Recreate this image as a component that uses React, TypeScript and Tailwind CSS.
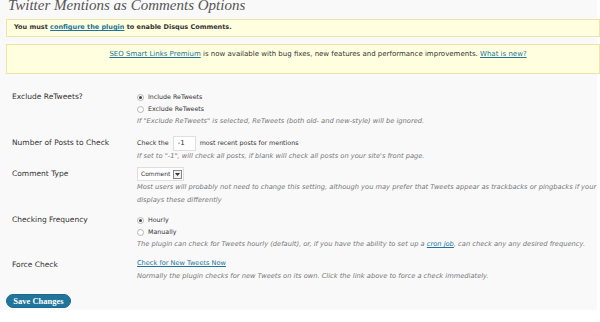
import React from "react";

const Radio = ({ checked }: { checked?: boolean }) => (
  <span className="inline-flex items-center justify-center w-[7px] h-[7px] rounded-full border border-[#b5b5b5] bg-white mr-[4px] shrink-0">
    {checked && <span className="w-[3px] h-[3px] rounded-full bg-[#444]" />}
  </span>
);

export default function App() {
  return (
    <div className="w-[600px] h-[322px] bg-white overflow-hidden" style={{ fontFamily: '"DejaVu Sans", Verdana, sans-serif' }}>
      <div className="w-[597px] h-[310px] bg-[#f9f9f9] text-[#333]">
        <div className="h-[19px] pl-[8px] overflow-hidden">
          <div className="mt-[-6px] italic text-[#555] text-[15px] leading-[22px] whitespace-nowrap" style={{ fontFamily: '"Liberation Serif", Georgia, serif' }}>
            Twitter Mentions as Comments Options
          </div>
        </div>
        <div className="ml-[6px] mr-[-3px] h-[18px] bg-[#ffffe0] border border-[#ece6a6] flex items-center pl-[7px] font-bold text-[6.5px] text-[#333]">
          <span>You must <a className="text-[#21759b] underline">configure the plugin</a> to enable Disqus Comments.</span>
        </div>
        <div className="ml-[6px] mr-[-3px] mt-[7px] h-[30px] bg-[#ffffe0] border border-[#ece6a6] pt-[3px] pl-[30px] text-center text-[7px] leading-[12px]">
          <a className="text-[#21759b] underline">SEO Smart Links Premium</a> is now available with bug fixes, new features and performance improvements. <a className="text-[#21759b] underline">What is new?</a>
        </div>

        <div className="overflow-hidden">
          <div className="mt-[17px] flex leading-[12px]">
            <div className="w-[137px] shrink-0 pl-[12px] text-[7.5px]">Exclude ReTweets?</div>
            <div className="flex flex-col">
              <div className="flex items-center text-[6.3px]"><Radio checked />Include ReTweets</div>
              <div className="flex items-center text-[6.3px]"><Radio />Exclude ReTweets</div>
              <div className="italic text-[#777] text-[6.7px] whitespace-nowrap">If "Exclude ReTweets" is selected, ReTweets (both old- and new-style) will be ignored.</div>
            </div>
          </div>

          <div className="mt-[9px] flex leading-[12px]">
            <div className="w-[137px] shrink-0 pl-[12px] pt-[1px] text-[7.5px]">Number of Posts to Check</div>
            <div className="flex flex-col">
              <div className="flex items-center h-[14px] text-[6.3px] whitespace-nowrap">
                Check the
                <span className="mx-[4px] w-[23px] h-[15px] bg-white border border-[#dfdfdf] flex items-center pl-[4px] text-[7px]">-1</span>
                most recent posts for mentions
              </div>
              <div className="italic text-[#777] text-[6.7px] whitespace-nowrap">If set to "-1", will check all posts, if blank will check all posts on your site's front page.</div>
            </div>
          </div>

          <div className="mt-[5px] flex leading-[12px]">
            <div className="w-[137px] shrink-0 pl-[12px] pt-[1px] text-[7.5px]">Comment Type</div>
            <div className="flex flex-col min-w-0">
              <div className="h-[14px] flex">
                <span className="w-[47px] h-[14px] bg-white border border-[#dfdfdf] flex items-center pl-[3px] justify-between pr-[1px] text-[6px]">
                  Comment
                  <span className="w-[9px] h-[9px] border border-[#888] bg-[#f0f0f0] flex items-center justify-center">
                    <svg width="5" height="3" viewBox="0 0 5 3"><path d="M0 0h5L2.5 3z" fill="#333" /></svg>
                  </span>
                </span>
              </div>
              <div className="italic text-[#777] text-[6.7px] leading-[12.5px] whitespace-nowrap">Most users will probably not need to change this setting, although you may prefer that Tweets appear as trackbacks or pingbacks if your theme</div>
              <div className="italic text-[#777] text-[6.7px] leading-[12.5px]">displays these differently</div>
            </div>
          </div>

          <div className="mt-[8px] flex leading-[12px]">
            <div className="w-[137px] shrink-0 pl-[12px] text-[7.5px]">Checking Frequency</div>
            <div className="flex flex-col">
              <div className="flex items-center text-[6.3px]"><Radio checked />Hourly</div>
              <div className="flex items-center text-[6.3px]"><Radio />Manually</div>
              <div className="italic text-[#777] text-[6.7px] whitespace-nowrap">The plugin can check for Tweets hourly (default), or, if you have the ability to set up a <a className="text-[#21759b] underline">cron job</a>, can check any any desired frequency.</div>
            </div>
          </div>

          <div className="mt-[7px] flex leading-[13px]">
            <div className="w-[137px] shrink-0 pl-[12px] pt-[1px] text-[7.5px]">Force Check</div>
            <div className="flex flex-col">
              <a className="text-[#21759b] underline text-[6.6px]">Check for New Tweets Now</a>
              <div className="italic text-[#777] text-[6.7px] whitespace-nowrap">Normally the plugin checks for new Tweets on its own. Click the link above to force a check immediately.</div>
            </div>
          </div>
        </div>

        <div className="mt-[11px] ml-[6px]">
          <button className="w-[65px] h-[14px] rounded-full bg-[#21759b] border border-[#1e6a8d] text-white font-bold text-[8.5px] leading-[12px] flex items-center justify-center" style={{ fontFamily: '"Liberation Serif", Georgia, serif' }}>
            Save Changes
          </button>
        </div>
      </div>
    </div>
  );
}
